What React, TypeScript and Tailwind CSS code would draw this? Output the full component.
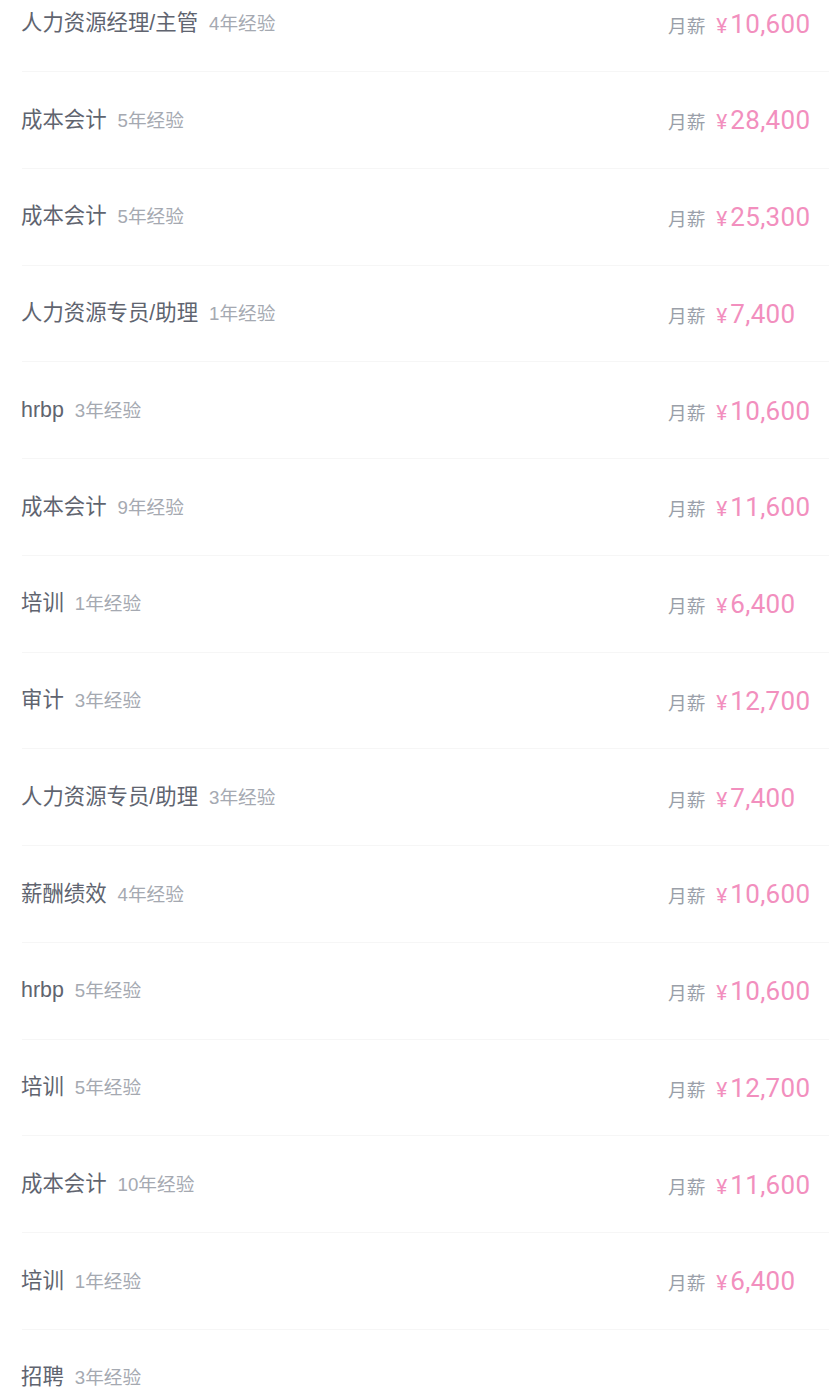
import React from "react";

type Row = { title: string; exp: string; salary?: string };

const rows: Row[] = [
  { title: "人力资源经理/主管", exp: "4年经验", salary: "10,600" },
  { title: "成本会计", exp: "5年经验", salary: "28,400" },
  { title: "成本会计", exp: "5年经验", salary: "25,300" },
  { title: "人力资源专员/助理", exp: "1年经验", salary: "7,400" },
  { title: "hrbp", exp: "3年经验", salary: "10,600" },
  { title: "成本会计", exp: "9年经验", salary: "11,600" },
  { title: "培训", exp: "1年经验", salary: "6,400" },
  { title: "审计", exp: "3年经验", salary: "12,700" },
  { title: "人力资源专员/助理", exp: "3年经验", salary: "7,400" },
  { title: "薪酬绩效", exp: "4年经验", salary: "10,600" },
  { title: "hrbp", exp: "5年经验", salary: "10,600" },
  { title: "培训", exp: "5年经验", salary: "12,700" },
  { title: "成本会计", exp: "10年经验", salary: "11,600" },
  { title: "培训", exp: "1年经验", salary: "6,400" },
  { title: "招聘", exp: "3年经验" },
];

export default function App() {
  return (
    <div
      className="w-[829px] h-[1396px] overflow-hidden bg-white"
      style={{ fontFamily: '"Liberation Sans", "Noto Sans CJK SC", sans-serif' }}
    >
      <div className="mt-[-24.75px] pl-[22px]">
        {rows.map((r, i) => (
          <div
            key={i}
            className="h-[96.75px] flex items-center justify-between border-b border-[#f6f6f6] pt-[1px]"
          >
            <div className="flex items-baseline gap-[11px] -ml-[1px]">
              <span className="text-[21.4px] text-[#60646f] leading-none">{r.title}</span>
              <span className="text-[18.67px] text-[#a5a9b1] leading-none">{r.exp}</span>
            </div>
            {r.salary && (
              <div className="w-[161px] flex items-baseline">
                <span className="text-[18.67px] text-[#9a9fa9] leading-none mr-[11px]">月薪</span>
                <span
                  className="text-[#f28fbe] leading-none flex items-baseline"
                  style={{ fontFamily: 'Roboto, "Noto Sans", sans-serif' }}
                >
                  <span className="text-[21px] mr-[3px]">¥</span>
                  <span className="text-[26px] tracking-[0.3px]">{r.salary}</span>
                </span>
              </div>
            )}
          </div>
        ))}
      </div>
    </div>
  );
}
